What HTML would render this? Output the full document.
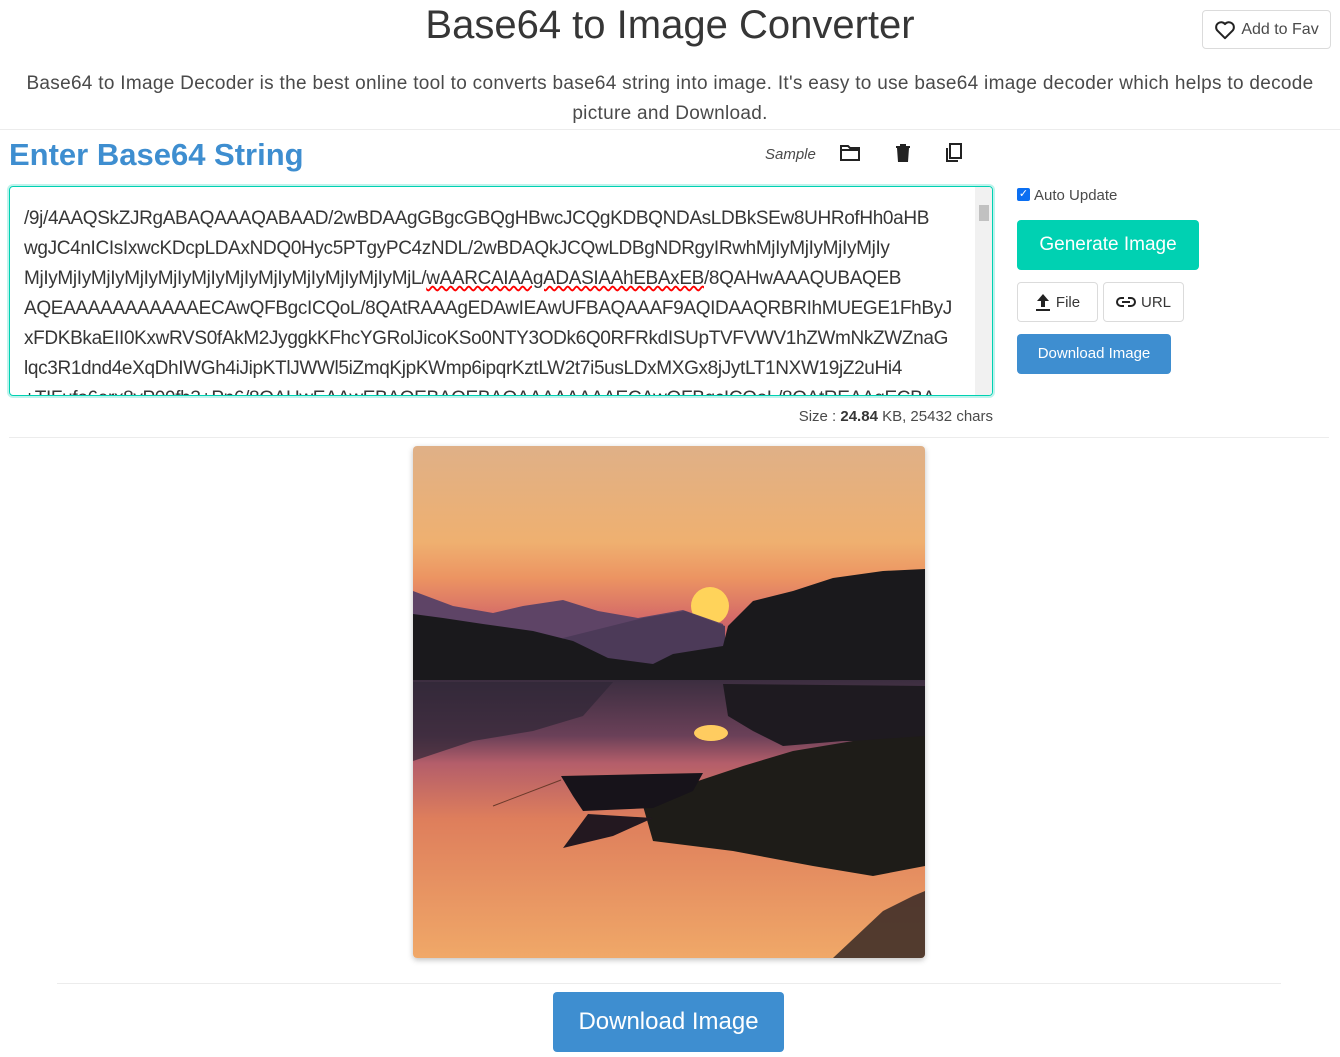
<!DOCTYPE html>
<html><head><meta charset="utf-8"><style>
*{box-sizing:border-box;margin:0;padding:0}
body{width:1340px;height:1057px;overflow:hidden;background:#fff;font-family:"Liberation Sans",sans-serif;color:#4a4a4a;position:relative}
.a{position:absolute}
h1{position:absolute;left:0;width:1340px;top:0;text-align:center;font-size:40px;font-weight:500;color:#363636;line-height:50px}
.desc{left:10px;width:1320px;top:69px;text-align:center;font-size:19px;line-height:30px;color:#4a4a4a;letter-spacing:0.3px}
.hr{height:1px;background:#ececec}
.ta{left:9px;top:186px;width:984px;height:210px;border:1px solid #00d1b2;box-shadow:0 0 0 2px rgba(0,209,178,.25);border-radius:4px;overflow:hidden}
.ta .t{position:absolute;left:14px;top:17px;font-size:19px;line-height:30px;color:#363636;white-space:nowrap;letter-spacing:-0.35px}
.sb{position:absolute;right:0;top:0;width:17px;height:208px;background:#f1f1f1}
.btn{position:absolute;border-radius:4px;text-align:center;color:#fff}
.ob{position:absolute;border:1px solid #dbdbdb;border-radius:4px;background:#fff;color:#363636;font-size:15px;display:flex;align-items:center;justify-content:center;gap:5px}
</style></head><body>
<h1>Base64 to Image Converter</h1>
<div class="ob" style="left:1202px;top:10px;width:129px;height:39px;font-size:16px;color:#4a4a4a"><svg width="22" height="20" viewBox="0 0 24 22"><path d="M12 20 L3.5 11.5 A5 5 0 0 1 12 4.5 A5 5 0 0 1 20.5 11.5 Z" fill="none" stroke="#222" stroke-width="2.2" stroke-linejoin="round"/></svg>Add to Fav</div>
<div class="a desc">Base64 to Image Decoder is the best online tool to converts base64 string into image. It's easy to use base64 image decoder which helps to decode picture and Download.</div>
<div class="a hr" style="left:0;top:129px;width:1340px"></div>
<div class="a" style="left:9px;top:137px;font-size:31px;font-weight:bold;color:#3e8ed0">Enter Base64 String</div>
<div class="a" style="left:765px;top:146px;font-size:15px;font-style:italic;color:#4a4a4a">Sample</div>
<svg class="a" style="left:839px;top:143px" width="22" height="20" viewBox="0 0 22 20"><path d="M2 3h7l2 2h9v12H2z" fill="none" stroke="#222" stroke-width="2"/><path d="M2 7h18" stroke="#222" stroke-width="2"/></svg>
<svg class="a" style="left:895px;top:143px" width="16" height="20" viewBox="0 0 16 20"><path d="M1 3h14v2H1zM5 1h6v2H5zM2 5h12l-1 14H3z" fill="#222"/></svg>
<svg class="a" style="left:944px;top:142px" width="20" height="22" viewBox="0 0 20 22"><rect x="6" y="2" width="11" height="14" fill="none" stroke="#222" stroke-width="2"/><path d="M3 6v13h11" fill="none" stroke="#222" stroke-width="2"/></svg>
<div class="a ta"><div class="t">/9j/4AAQSkZJRgABAQAAAQABAAD/2wBDAAgGBgcGBQgHBwcJCQgKDBQNDAsLDBkSEw8UHRofHh0aHB<br>wgJC4nICIsIxwcKDcpLDAxNDQ0Hyc5PTgyPC4zNDL/2wBDAQkJCQwLDBgNDRgyIRwhMjIyMjIyMjIyMjIy<br>MjIyMjIyMjIyMjIyMjIyMjIyMjIyMjIyMjIyMjIyMjIyMjL/<span style="text-decoration:underline wavy red">wAARCAIAAgADASIAAhEBAxEB</span>/8QAHwAAAQUBAQEB<br>AQEAAAAAAAAAAAECAwQFBgcICQoL/8QAtRAAAgEDAwIEAwUFBAQAAAF9AQIDAAQRBRIhMUEGE1FhByJ<br>xFDKBkaEII0KxwRVS0fAkM2JyggkKFhcYGRolJicoKSo0NTY3ODk6Q0RFRkdISUpTVFVWV1hZWmNkZWZnaG<br>lqc3R1dnd4eXqDhIWGh4iJipKTlJWWl5iZmqKjpKWmp6ipqrKztLW2t7i5usLDxMXGx8jJytLT1NXW19jZ2uHi4<br>+TIFufo6erx8vP09fb3+Pn6/8QAHwEAAwEBAQEBAQEBAQAAAAAAAAECAwQFBgcICQoL/8QAtREAAgECBA</div><div class="sb"><div style="position:absolute;left:4px;top:18px;width:10px;height:16px;background:#c1c1c1"></div></div></div>
<div class="a" style="left:700px;width:293px;top:408px;text-align:right;font-size:15px;color:#4a4a4a">Size : <b style="color:#363636">24.84</b> KB, 25432 chars</div>
<div class="a" style="left:1017px;top:188px;width:13px;height:13px;background:#0b6ff2;border-radius:2px;color:#fff;font-size:11px;line-height:13px;text-align:center">✓</div>
<div class="a" style="left:1034px;top:187px;font-size:15px">Auto Update</div>
<div class="btn" style="left:1017px;top:220px;width:182px;height:50px;background:#00d1b2;font-size:19px;line-height:50px">Generate Image</div>
<div class="ob" style="left:1017px;top:282px;width:81px;height:40px"><svg width="16" height="18" viewBox="0 0 16 18"><path d="M8 1L2 8h4v6h4V8h4z M1 16h14v2H1z" fill="#222"/></svg>File</div>
<div class="ob" style="left:1103px;top:282px;width:81px;height:40px"><svg width="20" height="12" viewBox="0 0 20 12"><path d="M8 2H5a4 4 0 0 0 0 8h3M12 2h3a4 4 0 0 1 0 8h-3M6 6h8" fill="none" stroke="#222" stroke-width="2"/></svg>URL</div>
<div class="btn" style="left:1017px;top:334px;width:154px;height:40px;background:#3e8ed0;font-size:15px;line-height:40px">Download Image</div>
<div class="a hr" style="left:9px;top:437px;width:1320px"></div>
<svg class="a" style="left:413px;top:446px;border-radius:4px;box-shadow:0 2px 6px rgba(0,0,0,.25)" width="512" height="512" viewBox="0 0 512 512">
<defs><linearGradient id="s" x1="0" y1="0" x2="0" y2="1"><stop offset="0" stop-color="#dfb087"/><stop offset=".4" stop-color="#efb070"/><stop offset=".55" stop-color="#ec9462"/><stop offset=".72" stop-color="#d46a68"/><stop offset="1" stop-color="#9a4a6a"/></linearGradient>
<linearGradient id="w" x1="0" y1="0" x2="0" y2="1"><stop offset="0" stop-color="#3c2e40"/><stop offset=".2" stop-color="#6a4058"/><stop offset=".3" stop-color="#b45e6a"/><stop offset=".5" stop-color="#de7e5c"/><stop offset="1" stop-color="#f0a868"/></linearGradient></defs>
<rect width="512" height="240" fill="url(#s)"/>
<circle cx="297" cy="160" r="19" fill="#ffd35a"/>
<path d="M0 145 L40 160 L80 167 L110 160 L150 154 L185 165 L225 172 L270 164 L310 178 L312 225 L0 225Z" fill="#5e4466"/>
<path d="M150 192 L230 172 L272 165 L312 180 L312 228 L200 222Z" fill="#4c3a58"/>
<path d="M0 168 L30 172 L70 178 L120 185 L160 195 L195 212 L240 218 L260 208 L310 200 L315 180 L340 155 L380 145 L420 132 L470 125 L512 123 L512 240 L0 236Z" fill="#1a191c"/>
<rect y="234" width="512" height="278" fill="url(#w)"/>
<path d="M0 236 L200 236 L170 270 L120 285 L60 295 L0 315Z" fill="#2f2636" opacity=".7"/>
<path d="M310 238 L512 240 L512 295 L430 295 L370 300 L340 285 L315 270Z" fill="#1e1a20"/>
<ellipse cx="298" cy="287" rx="17" ry="8" fill="#ffcc60"/>
<path d="M230 360 L270 340 L330 320 L380 305 L440 295 L512 290 L512 420 L460 430 L400 420 L320 405 L240 395Z" fill="#1e1c18"/>
<path d="M148 330 L290 327 L280 345 L240 362 L170 365 L160 350Z" fill="#17131a"/>
<path d="M150 402 L175 368 L240 372 L200 390Z" fill="#231820"/>
<path d="M80 360 L148 334" stroke="#6a3a2a" stroke-width="1"/>
<path d="M420 512 L470 465 L500 450 L512 445 L512 512Z" fill="#2a2020" opacity=".8"/>
</svg>
<div class="a hr" style="left:57px;top:983px;width:1224px"></div>
<div class="btn" style="left:553px;top:992px;width:231px;height:60px;background:#3e8ed0;font-size:24px;line-height:60px">Download Image</div>
</body></html>
